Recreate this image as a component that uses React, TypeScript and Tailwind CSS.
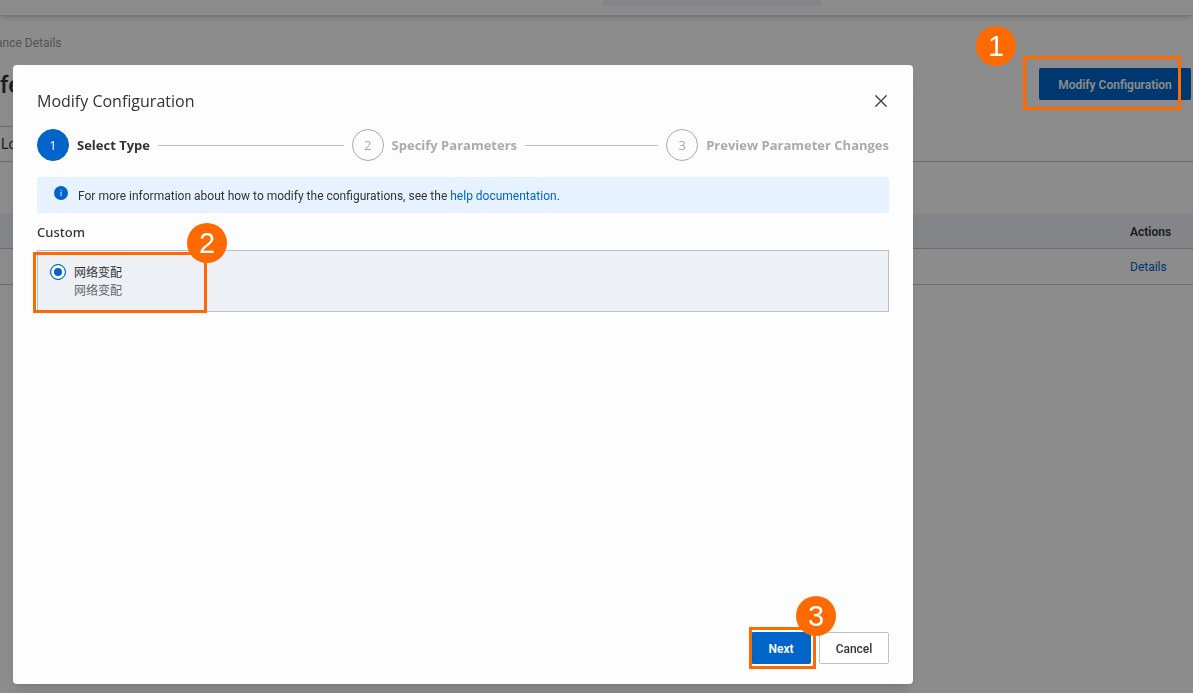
import React, { useState } from 'react';
import { clsx } from 'clsx';

interface Step {
  title: string;
}

interface MarkerProps {
  number: number;
  boxClass: string;
  badgeClass: string;
}

const steps: Step[] = [
  { title: 'Select Type' },
  { title: 'Specify Parameters' },
  { title: 'Preview Parameter Changes' },
];

const options = [{ id: 'network', label: '网络变配', description: '网络变配' }];

// Orange frame with a numbered badge, drawn over the control it points at
const Marker: React.FC<MarkerProps> = ({ number, boxClass, badgeClass }) => (
  <>
    <span className={clsx('pointer-events-none absolute z-20 border-3 border-[#ff6a00]', boxClass)} />
    <span
      className={clsx(
        "pointer-events-none absolute z-20 flex size-10 items-center justify-center rounded-full bg-[#ff6a00] font-['Liberation_Sans',sans-serif] text-[29px] leading-8 font-normal text-white",
        badgeClass
      )}
    >
      {number}
    </span>
  </>
);

const InfoIcon: React.FC = () => (
  <svg className="mb-1 size-3.5 shrink-0" viewBox="0 0 14 14" aria-hidden="true">
    <circle cx="7" cy="7" r="7" fill="#0064c8" />
    <rect x="6.4" y="3.6" width="1.2" height="1.2" fill="#b3d4f5" />
    <rect x="6.4" y="5.8" width="1.2" height="4.4" fill="#b3d4f5" />
  </svg>
);

const CloseIcon: React.FC = () => (
  <svg className="size-3" viewBox="0 0 12 12" fill="none" stroke="#444" strokeWidth="1.4" aria-hidden="true">
    <path d="M0.4 0.4 L11.6 11.6 M11.6 0.4 L0.4 11.6" />
  </svg>
);

const Steps: React.FC<{ current: number }> = ({ current }) => (
  <ol className="flex font-['Open_Sans',sans-serif] text-[13px]">
    {steps.map((step, index) => {
      const active = index === current;
      const last = index === steps.length - 1;
      return (
        <li key={step.title} className={clsx('flex items-center gap-2', !last && 'flex-1 pr-2')}>
          <span
            className={clsx(
              'flex size-8 shrink-0 items-center justify-center rounded-full border pt-px',
              active ? 'border-[#0064c8] bg-[#0064c8] text-white' : 'border-[#aaa] text-[#aaa]'
            )}
          >
            {index + 1}
          </span>
          <span className={clsx('pt-px font-bold whitespace-nowrap', active ? 'text-[#333]' : 'text-[#aaa]')}>
            {step.title}
          </span>
          {!last && <span className="h-px flex-1 bg-[#c1c1c1]" />}
        </li>
      );
    })}
  </ol>
);

const Page: React.FC = () => (
  <div className="min-h-screen bg-white">
    <header className="flex h-4 justify-center border-b border-[#d8d8d8] pl-[231px] shadow-md">
      <div className="h-1.5 w-[218px] bg-[#eff3f8]" />
    </header>
    <nav className="-ml-1 pt-[17px] text-xs leading-5 text-[#999]">ance Details</nav>
    <div className="flex h-[73px] items-start justify-between pt-[15px] pr-0.5">
      <h1 className="pt-px text-2xl leading-8 font-medium text-[#333]">fe</h1>
      <div className="relative">
        <button className="h-8 w-[152px] rounded-xs bg-[#0064c8] pt-px text-xs font-semibold text-white">
          Modify Configuration
        </button>
        <Marker number={1} boxClass="-top-3 -left-4 h-[54px] right-2.5" badgeClass="-top-[42px] -left-[63px]" />
      </div>
    </div>
    <div className="flex h-9 border-b border-[#c0c6cc]">
      <button className="w-24 border-t border-[#c0c6cc] pl-px text-left text-sm text-[#333]">Lo</button>
    </div>
    <table className="mt-[52px] w-full table-fixed text-left text-xs">
      <thead>
        <tr className="h-[34px] border-b border-[#c0c6cc] bg-[#eff3f8]">
          <th className="pt-0.5 pl-[1130px] font-semibold text-[#333]">Actions</th>
        </tr>
      </thead>
      <tbody>
        <tr className="h-9 border-b border-[#c0c6cc]">
          <td className="pt-0.5 pl-[1130px]">
            <a href="#details" className="text-[#0064c8]">Details</a>
          </td>
        </tr>
      </tbody>
    </table>
  </div>
);

const ModifyDialog: React.FC = () => {
  const [selected, setSelected] = useState('network');

  return (
    <div
      role="dialog"
      aria-labelledby="dialog-title"
      className="flex flex-1 flex-col rounded bg-[#fdfdfd] px-6 pt-6 pb-5 shadow-lg"
    >
      <div className="flex h-6 items-center justify-between">
        <h2 id="dialog-title" className="font-['Open_Sans',sans-serif] text-base leading-6 font-medium text-[#333]">
          Modify Configuration
        </h2>
        <button aria-label="Close" className="p-0.5">
          <CloseIcon />
        </button>
      </div>

      <div className="mt-4">
        <Steps current={0} />
      </div>

      <div className="mt-4 flex h-9 items-center gap-2.5 rounded-xs bg-[#e6f2ff] px-[17px] text-xs text-[#333]">
        <InfoIcon />
        <p className="pt-px">
          For more information about how to modify the configurations, see the{' '}
          <a href="#help" className="text-[#0064c8]">help documentation</a>.
        </p>
      </div>

      <fieldset className="mt-[9px]">
        <legend className="mb-2 font-['Noto_Sans',sans-serif] text-[13px] leading-5 font-medium text-[#333]">Custom</legend>
        {options.map((option) => (
          <div key={option.id} className="relative h-[62px] border border-[#b9bec7] bg-[#edf0f5] px-3 pt-3">
            <label className="flex items-start gap-2 text-xs leading-[18px] text-[#333]">
              <input
                type="radio"
                name="type"
                value={option.id}
                checked={selected === option.id}
                onChange={() => setSelected(option.id)}
                className="mt-px size-4 appearance-none rounded-full border border-[#0064c8] bg-white checked:bg-[#0064c8] checked:shadow-[inset_0_0_0_3px_#fff]"
              />
              <span className="pt-px">
                {option.label}
                <span className="block text-[#666]">{option.description}</span>
              </span>
            </label>
            <Marker number={2} boxClass="top-px -left-[5px] h-[61px] w-[174px]" badgeClass="-top-7 left-[149px]" />
          </div>
        ))}
      </fieldset>

      <div className="mt-auto flex justify-end gap-2 text-xs font-medium">
        <div className="relative">
          <button className="h-8 w-[60px] rounded-xs bg-[#0064c8] pt-px font-semibold text-white">Next</button>
          <Marker number={3} boxClass="-right-[5px] -left-0.5 -top-[5px] h-[42px]" badgeClass="-top-9 left-[45px]" />
        </div>
        <button className="h-8 w-[70px] rounded-xs border border-[#c1c1c1] bg-white pt-px text-[#333]">Cancel</button>
      </div>
    </div>
  );
};

export default function App() {
  return (
    <div className="min-h-screen overflow-hidden font-['Roboto','Noto_Sans_CJK_SC',sans-serif]">
      <Page />
      <div className="fixed inset-0 z-10 flex bg-black/45 pt-[65px] pr-[280px] pb-[9px] pl-[13px]">
        <ModifyDialog />
      </div>
    </div>
  );
}
